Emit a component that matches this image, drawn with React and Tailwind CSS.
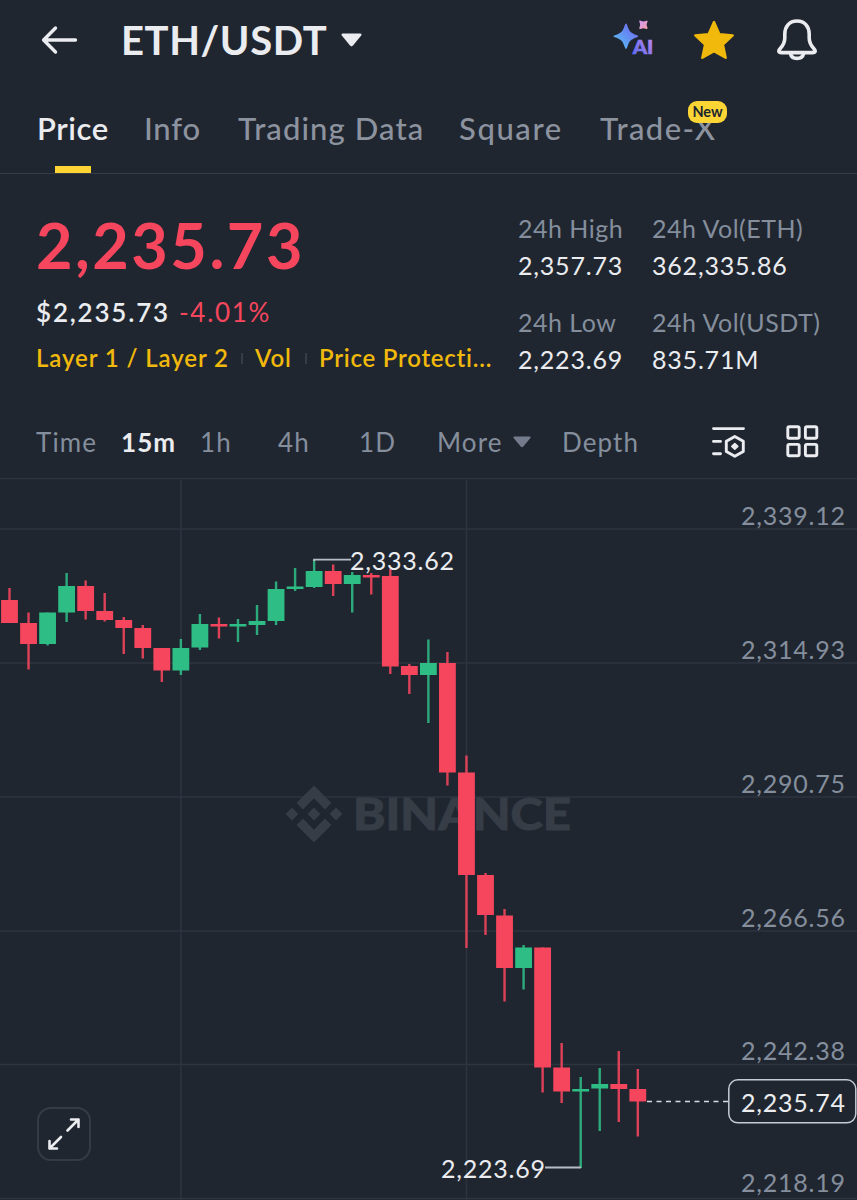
import { SiBinance } from 'react-icons/si'

const UP = '#2ebd85'
const DOWN = '#f6465d'

const TABS = [
  { label: 'Price', active: true, width: 'w-[107px]', tracking: 'tracking-[0.6px]', weight: 'font-semibold' },
  { label: 'Info', width: 'w-[94px]', tracking: 'tracking-[0.8px]', weight: 'font-medium' },
  { label: 'Trading Data', width: 'w-[221px]', tracking: 'tracking-[1.1px]', weight: 'font-medium' },
  { label: 'Square', width: 'w-[141px]', tracking: 'tracking-[1.6px]', weight: 'font-medium' },
  { label: 'Trade-X', badge: 'New', width: 'w-[120px]', tracking: 'tracking-[1.4px]', weight: 'font-medium' },
]

const STATS = [
  { label: '24h High', value: '2,357.73' },
  { label: '24h Vol(ETH)', value: '362,335.86' },
  { label: '24h Low', value: '2,223.69' },
  { label: '24h Vol(USDT)', value: '835.71M' },
]

const INTERVALS = [
  { label: 'Time', width: 'w-[85px]' },
  { label: '15m', active: true, width: 'w-[79px]' },
  { label: '1h', width: 'w-[78px]' },
  { label: '4h', width: 'w-[81px]' },
  { label: '1D', width: 'w-[78px]' },
  { label: 'More', caret: true, width: 'w-[125px]' },
  { label: 'Depth', width: 'w-[90px]' },
]

const GRID = [
  { y: 529, label: '2,339.12' },
  { y: 663, label: '2,314.93' },
  { y: 797, label: '2,290.75' },
  { y: 931, label: '2,266.56' },
  { y: 1064.5, label: '2,242.38' },
  { y: 1198.5, label: '2,218.19', labelY: 1192 },
]

// [direction, body top, body bottom, wick top, wick bottom]
const CANDLES = [
  ['d', 600, 623, 588, 623],
  ['d', 623, 644, 612.5, 669.5],
  ['u', 612.5, 644, 612.5, 645.5],
  ['u', 586, 612.5, 573, 622],
  ['d', 586, 611, 580.5, 619.5],
  ['d', 611, 620, 593, 621.5],
  ['d', 620, 628, 617, 654],
  ['d', 628, 648, 625, 658.5],
  ['d', 648, 670.5, 648, 682],
  ['u', 648, 670.5, 639, 675],
  ['u', 624, 647.5, 614, 650],
  ['d', 624, 626.5, 617.5, 638.5],
  ['u', 624, 626.5, 619, 642],
  ['u', 621, 625, 605, 635],
  ['u', 589, 621, 581.5, 625],
  ['u', 586.5, 589, 568, 591],
  ['u', 571, 587, 560, 588],
  ['d', 571, 584, 564.5, 596],
  ['u', 575, 584, 572, 612.5],
  ['d', 575, 577.5, 573, 594.5],
  ['d', 576, 666.5, 569, 674],
  ['d', 666, 675, 664, 694],
  ['u', 663, 675, 639.5, 723],
  ['d', 663, 772.5, 652, 785.5],
  ['d', 772.5, 875, 755.5, 948],
  ['d', 875, 915, 873, 935],
  ['d', 915.5, 968, 909, 1001.5],
  ['u', 947.5, 968, 945, 989.5],
  ['d', 947.5, 1067.5, 947.5, 1092.5],
  ['d', 1067.5, 1091.5, 1043, 1103],
  ['u', 1089, 1091.5, 1077, 1168],
  ['u', 1084, 1088.5, 1068, 1131],
  ['d', 1084, 1089, 1051, 1122],
  ['d', 1089, 1101.5, 1069, 1136.5],
]

function Header() {
  return (
    <header className="flex h-20 items-center pl-[41px] pr-[40px]">
      <svg className="h-[30px] w-[37px] shrink-0" viewBox="0 0 37 30" fill="none" stroke="#eaecef" strokeWidth="3.4" strokeLinecap="round" strokeLinejoin="round">
        <path d="M34.5 15H3M14.5 3L2.6 15L14.5 27" />
      </svg>
      <h1 className="ml-[43px] w-[206px] whitespace-nowrap text-[40px] font-bold leading-none tracking-[0.6px]">ETH/USDT</h1>
      <svg className="ml-[14px] h-[14px] w-[21px] shrink-0" viewBox="0 0 21 14" fill="#eaecef">
        <path d="M2 0.5H19Q21.5 0.8 20 2.8L12 12.6Q10.5 14.2 9 12.6L1 2.8Q-0.5 0.8 2 0.5Z" />
      </svg>
      <div className="ml-auto flex items-center">
        <AiIcon />
        <svg className="ml-[39px] h-[42px] w-[42px]" viewBox="0 0 42 42" fill="#f0b90b" stroke="#f0b90b" strokeWidth="2.4" strokeLinejoin="round">
          <path d="M21 3L26.4 15.2L39.7 16.4L29.9 25.6L32.7 38.8L21 32.3L9.3 38.8L12.1 25.6L2.3 16.4L15.6 15.2Z" />
        </svg>
        <svg className="ml-[42px] h-[42px] w-[40px]" viewBox="0 0 40 42" fill="none" stroke="#eaecef" strokeWidth="3.6" strokeLinejoin="round">
          <path d="M20 2C12 2 7.8 8 7.8 15V19C7.8 24.5 5.8 26.8 3.1 29.7C0.8 32.3 1.9 33.6 4.4 33.6H35.6C38.1 33.6 39.2 32.3 36.9 29.7C34.2 26.8 32.2 24.5 32.2 19V15C32.2 8 28 2 20 2Z" />
          <path d="M13.3 34.3C14 37.5 16.6 39.4 20 39.4S26 37.5 26.7 34.3" />
        </svg>
      </div>
    </header>
  )
}

function AiIcon() {
  return (
    <svg className="h-[40px] w-[42px]" viewBox="0 0 42 40">
      <defs>
        <linearGradient id="spark" x1="0" y1="1" x2="1" y2="0">
          <stop offset="0.15" stopColor="#58b8f5" />
          <stop offset="0.8" stopColor="#6d73f0" />
        </linearGradient>
        <linearGradient id="dot" x1="0" y1="0" x2="1" y2="1">
          <stop offset="0.2" stopColor="#d79be8" />
          <stop offset="1" stopColor="#f3a0a8" />
        </linearGradient>
        <linearGradient id="letters" x1="0" y1="1" x2="1" y2="0">
          <stop offset="0.1" stopColor="#5e6bf2" />
          <stop offset="1" stopColor="#c28be6" />
        </linearGradient>
      </defs>
      <path fill="url(#spark)" d="M14 3.5Q14.8 3.5 15.3 5.5C17.4 11.8 18.5 12.9 25 15.2Q27.5 16.2 25 17.3C18.5 19.6 17.4 20.9 15.3 27Q14 30.8 12.7 27C10.6 20.9 9.5 19.6 3 17.3Q-0.2 16.2 3 15.2C9.5 12.9 10.6 11.8 12.7 5.5Q13.2 3.5 14 3.5Z" />
      <path fill="url(#dot)" d="M27.3 1.6C26.8 0.6 27.8 0.4 28.6 0.8C30.7 1.8 32.1 1.8 34.3 0.8C35.5 0.4 36 1 35.4 2.1C34.4 4.2 34.5 5.5 35.4 7.6C35.9 8.8 35.2 9.4 34.1 8.9C32 8 30.8 8 28.8 8.9C27.7 9.4 27 8.7 27.4 7.7C28.3 5.5 28.3 4 27.3 1.6Z" />
      <text x="20.8" y="34.3" fontSize="18.5" fontWeight="900" textLength="20.5" lengthAdjust="spacingAndGlyphs" fill="url(#letters)" stroke="url(#letters)" strokeWidth="0.6">AI</text>
    </svg>
  )
}

function Tabs() {
  return (
    <nav className="flex h-[94px] border-b border-[#363d47] pl-[37px] pt-[27px]">
      {TABS.map((tab) => (
        <div key={tab.label} className={`relative ${tab.width} shrink-0`}>
          <span className={`whitespace-nowrap text-[31px] leading-[42px] ${tab.weight} ${tab.tracking} ${tab.active ? 'text-[#eaecef]' : 'text-[#8c939f]'}`}>
            {tab.label}
          </span>
          {tab.badge && (
            <span className="absolute left-[88px] -top-[6px] flex h-[22px] w-[39px] items-center justify-center rounded-[9px] bg-[#fcd535] text-[14.5px] font-bold text-[#202630]">
              {tab.badge}
            </span>
          )}
          {tab.active && <span className="absolute bottom-0 left-[18px] h-[7px] w-[36px] bg-[#fcd535]" />}
        </div>
      ))}
    </nav>
  )
}

function Summary() {
  return (
    <section className="flex h-[228px] pl-[36px] pt-[36px]">
      <div className="w-[482px] shrink-0 whitespace-nowrap">
        <p className="-mt-[3px] text-[63px] font-bold leading-[76px] tracking-[2.5px] text-[#f6465d]">2,235.73</p>
        <p className="mt-[11px] flex text-[26px] leading-[36px]">
          <span className="w-[143px] font-semibold tracking-[1.8px] text-[#eaecef]">$2,235.73</span>
          <span className="tracking-[1.7px] text-[#f6465d]">-4.01%</span>
        </p>
        <p className="mt-[11px] flex items-center text-[24px] font-semibold leading-[34px] text-[#f0b90b]">
          <span className="w-[205px] tracking-[0.9px]">Layer 1 / Layer 2</span>
          <span className="h-[11px] w-[2px] bg-[#363d47]" />
          <span className="ml-[12px] w-[50px] tracking-[0.8px]">Vol</span>
          <span className="h-[11px] w-[2px] bg-[#363d47]" />
          <span className="ml-[12px] tracking-[0.75px]">Price Protecti...</span>
        </p>
      </div>
      <div className="grid h-[187px] grid-cols-[134px_190px] grid-rows-2 whitespace-nowrap text-[25px] leading-[37px]">
        {STATS.map((stat) => (
          <div key={stat.label}>
            <p className="tracking-[0.5px] text-[#848e9c]">{stat.label}</p>
            <p className="tracking-[0.8px] text-[#eaecef]">{stat.value}</p>
          </div>
        ))}
      </div>
    </section>
  )
}

function IntervalBar() {
  return (
    <div className="flex h-[76px] items-center pl-[36px] pt-[3px]">
      {INTERVALS.map((item) => (
        <div key={item.label} className={`flex shrink-0 items-center text-[26px] leading-[40px] tracking-[1.1px] ${item.width} ${item.active ? 'font-bold text-[#eaecef]' : 'text-[#848e9c]'}`}>
          {item.label}
          {item.caret && (
            <svg className="ml-[10px] h-[12px] w-[18px]" viewBox="0 0 18 12" fill="#737b8c">
              <path d="M1.5 0.5H16.5Q18.4 0.7 17.2 2.3L10.3 10.5Q9 12 7.7 10.5L0.8 2.3Q-0.4 0.7 1.5 0.5Z" />
            </svg>
          )}
        </div>
      ))}
      <svg className="ml-[60px] h-[32px] w-[34px]" viewBox="0 0 34 32" fill="none" stroke="#eaecef" strokeWidth="2.9" strokeLinecap="round" strokeLinejoin="round">
        <path d="M1.5 2.6H31.5M1.5 15.4H8.5M1.5 27.8H8.5" />
        <path d="M22.8 10.5L31.3 15.3V25.5L22.8 30.3L14.3 25.5V15.3Z" />
        <path d="M22.8 17.5L25.8 20.4L22.8 23.3L19.8 20.4Z" fill="#eaecef" strokeWidth="1.5" />
      </svg>
      <svg className="ml-[40px] h-[33px] w-[33px]" viewBox="0 0 33 33" fill="none" stroke="#eaecef" strokeWidth="2.9">
        <rect x="1.8" y="1.8" width="11.4" height="11.4" rx="1.5" />
        <rect x="19.4" y="1.8" width="11.4" height="11.4" rx="1.5" />
        <rect x="1.8" y="19.4" width="11.4" height="11.4" rx="1.5" />
        <rect x="19.4" y="19.4" width="11.4" height="11.4" rx="1.5" />
      </svg>
    </div>
  )
}

function Chart() {
  return (
    <div className="relative h-[722px]">
      <svg className="block h-[722px] w-[857px]" viewBox="0 478 857 722" fontSize="25">
        <g stroke="#2e353f" strokeWidth="1.5">
          <path d="M0 478.2H857" strokeWidth="2" />
          {GRID.map((line) => (
            <path key={line.y} d={`M0 ${line.y}H857`} />
          ))}
          <path d="M181 480V1200M466.5 480V1200" />
        </g>

        {/* Watermark */}
        <SiBinance x="285.5" y="785.5" size={57} color="#363d46" />
        <text x="353" y="830" fontSize="43" fontWeight="900" textLength="218" lengthAdjust="spacingAndGlyphs" fill="#363d46" stroke="#363d46" strokeWidth="0.8">BINANCE</text>

        {CANDLES.map(([dir, top, bottom, high, low], i) => {
          const x = 9.5 + i * 19.04
          return (
            <g key={i} fill={dir === 'u' ? UP : DOWN}>
              <rect x={x - 1.2} y={high} width="2.4" height={low - high} opacity="0.88" />
              <rect x={x - 8.4} y={top} width="16.8" height={bottom - top} />
            </g>
          )
        })}

        {/* High / low markers */}
        <g fill="#eaecef">
          <path d="M314 561V559.7H351" fill="none" stroke="#b7bdc6" strokeWidth="1.8" />
          <text x="350" y="569.5" textLength="104">2,333.62</text>
          <path d="M545 1167.5H581" fill="none" stroke="#b7bdc6" strokeWidth="1.8" />
          <text x="441" y="1178" textLength="104">2,223.69</text>
        </g>

        <g fill="#848e9c">
          {GRID.map((line) => (
            <text key={line.label} x="741" y={line.labelY ?? line.y - 4.5} textLength="104">{line.label}</text>
          ))}
        </g>

        {/* Last price */}
        <path d="M647 1101.5H729" stroke="#d5d9e0" strokeWidth="1.4" strokeDasharray="5 4.5" />
        <rect x="728.8" y="1079.8" width="127" height="43" rx="9" fill="#202630" stroke="#c5cad3" strokeWidth="1.5" />
        <text x="741" y="1111.5" textLength="104" fill="#eaecef">2,235.74</text>
      </svg>

      <button className="absolute bottom-[39px] left-[37px] flex h-[54px] w-[54px] items-center justify-center rounded-[14px] border-2 border-[#343b45] bg-[#202630]">
        <svg className="h-[34px] w-[34px]" viewBox="0 0 34 34" fill="none" stroke="#eaecef" strokeWidth="2.6" strokeLinecap="round" strokeLinejoin="round">
          <path d="M20.5 13.5L31.5 2.5M24 2.5H31.5V10M14 20L2.5 31.5M2.5 24V31.5H10" />
        </svg>
      </button>
    </div>
  )
}

export default function App() {
  return (
    <div className="h-[1200px] w-[857px] overflow-hidden bg-[#202630] font-['Lato','Open_Sans',sans-serif] text-[#eaecef]">
      <Header />
      <Tabs />
      <Summary />
      <IntervalBar />
      <Chart />
    </div>
  )
}
